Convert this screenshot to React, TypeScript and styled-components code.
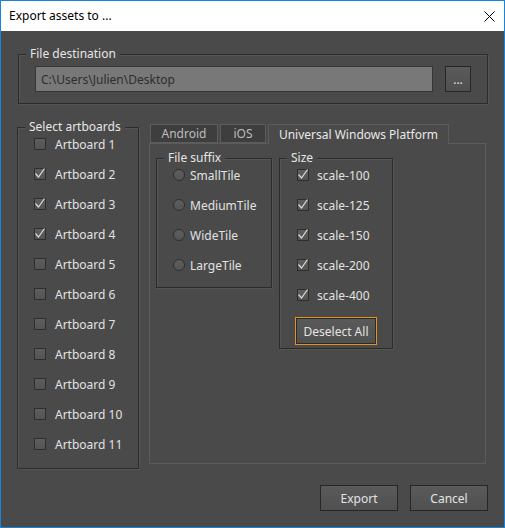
import React from 'react';
import styled, { createGlobalStyle } from 'styled-components';

const Global = createGlobalStyle`
  html, body { margin: 0; padding: 0; background: #4a4a4a; }
  body { font-family: "Noto Sans", "Segoe UI", "DejaVu Sans", sans-serif; font-size: 12px; }
  * { box-sizing: border-box; }
`;

const Window = styled.div`
  width: 505px;
  height: 528px;
  border: 1px solid #1883d7;
  background: #4a4a4a;
  display: flex;
  flex-direction: column;
  overflow: hidden;
`;

const TitleBar = styled.div`
  height: 30px;
  flex: none;
  background: #ffffff;
  display: flex;
  align-items: center;
  justify-content: space-between;
  padding: 0 9px 0 8px;
`;

const Title = styled.span`
  color: #000;
  font-size: 12px;
  line-height: 16px;
`;

const Body = styled.div`
  flex: 1;
  display: flex;
  flex-direction: column;
  padding: 23px 16px 16px 16px;
`;

const Group = styled.div<{ $w?: number; $pad: string }>`
  position: relative;
  border: 1px solid #2c2c2c;
  box-shadow: inset 1px 1px 0 #555, 1px 1px 0 #555;
  padding: ${(p) => p.$pad};
  ${(p) => (p.$w ? `width: ${p.$w}px; flex: none;` : '')}
`;

const Legend = styled.span`
  position: absolute;
  top: -9px;
  left: 7px;
  padding: 0 4px;
  line-height: 16px;
  background: #4a4a4a;
  color: #e6e6e6;
  white-space: nowrap;
`;

const DestGroup = styled(Group)`
  margin-left: 1px;
  height: 50px;
  display: flex;
  gap: 12px;
  align-items: center;
`;

const PathInput = styled.div`
  flex: 1;
  height: 26px;
  background: #787878;
  border: 1px solid #363636;
  color: #2e2e2e;
  display: flex;
  align-items: center;
  padding-left: 5px;
`;

const Button = styled.button<{ $w: number; $h?: number; $focus?: boolean }>`
  width: ${(p) => p.$w}px;
  height: ${(p) => p.$h ?? 26}px;
  flex: none;
  margin: 0;
  padding: 0;
  font: inherit;
  font-size: 12px;
  color: #e4e4e4;
  background: linear-gradient(#5a5a5a, #505050);
  border: 1px solid ${(p) => (p.$focus ? '#e8901e' : '#262626')};
  box-shadow: ${(p) => (p.$focus ? 'inset 0 0 0 1px #2a2a2a' : 'none')};
  display: flex;
  align-items: center;
  justify-content: center;
`;

const Row = styled.div`
  margin-top: 20px;
  display: flex;
  gap: 10px;
  align-items: flex-start;
`;

const ArtGroup = styled(Group)`
  margin-top: 3px;
`;

const Item = styled.div<{ $gap: number }>`
  display: flex;
  align-items: center;
  height: 30px;
  gap: ${(p) => p.$gap}px;
  color: #e2e2e2;
  white-space: nowrap;
`;

const Box = styled.span`
  width: 12px;
  height: 12px;
  flex: none;
  border: 1px solid #2e2e2e;
  background: linear-gradient(#5e5e5e, #535353);
  display: flex;
  align-items: center;
  justify-content: center;
  overflow: visible;
`;

const Radio = styled.span`
  width: 12px;
  height: 12px;
  flex: none;
  border-radius: 50%;
  border: 1px solid #2f2f2f;
  background: linear-gradient(#5e5e5e, #545454);
`;

const Tabs = styled.div`
  flex: 1;
  align-self: stretch;
  margin: 0 2px 5px 0;
  display: flex;
  flex-direction: column;
`;

const TabStrip = styled.div`
  height: 19px;
  flex: none;
  display: flex;
  align-items: flex-start;
  gap: 2px;
  padding-left: 1px;
`;

const Tab = styled.div<{ $active?: boolean; $w: number }>`
  position: relative;
  z-index: ${(p) => (p.$active ? 1 : 0)};
  width: ${(p) => p.$w}px;
  height: ${(p) => (p.$active ? 20 : 19)}px;
  border: 1px solid #5c5c5c;
  border-bottom: ${(p) => (p.$active ? 'none' : '1px solid #5c5c5c')};
  background: ${(p) => (p.$active ? '#4a4a4a' : '#3e3e3e')};
  color: ${(p) => (p.$active ? '#e8e8e8' : '#bdbdbd')};
  display: flex;
  align-items: center;
  justify-content: center;
  white-space: nowrap;
  padding-bottom: ${(p) => (p.$active ? 1 : 0)}px;
`;

const Panel = styled.div`
  flex: 1;
  border: 1px solid #5c5c5c;
  padding: 14px 0 0 6px;
  display: flex;
  gap: 7px;
  align-items: flex-start;
`;

const SizeItems = styled.div`
  padding-left: 2px;
`;

const DeselectWrap = styled.div`
  margin-top: 7px;
`;

const Footer = styled.div`
  margin-top: 16px;
  display: flex;
  justify-content: flex-end;
  gap: 12px;
`;

const Check = ({ checked }: { checked: boolean }) => (
  <Box>
    {checked && (
      <svg width="12" height="12" viewBox="0 0 12 12" style={{ overflow: 'visible' }}>
        <path d="M1.5 5.5 L4.5 9 L10.5 0.5" fill="none" stroke="#dcdcdc" strokeWidth="1.2" />
      </svg>
    )}
  </Box>
);

const artboards = [false, true, true, true, false, false, false, false, false, false, false];
const suffixes = ['SmallTile', 'MediumTile', 'WideTile', 'LargeTile'];
const scales = ['scale-100', 'scale-125', 'scale-150', 'scale-200', 'scale-400'];

export default function App() {
  return (
    <>
      <Global />
      <Window>
        <TitleBar>
          <Title>Export assets to ...</Title>
          <svg width="11" height="11" viewBox="0 0 11 11">
            <path d="M0.5 0.5 L10.5 10.5 M10.5 0.5 L0.5 10.5" stroke="#000" strokeWidth="1" />
          </svg>
        </TitleBar>
        <Body>
          <DestGroup $pad="11px 16px">
            <Legend>File destination</Legend>
            <PathInput>C:\Users\Julien\Desktop</PathInput>
            <Button $w={26}>...</Button>
          </DestGroup>
          <Row>
            <ArtGroup $w={122} $pad="1px 0 9px 16px">
              <Legend>Select artboards</Legend>
              {artboards.map((c, i) => (
                <Item key={i} $gap={9}>
                  <Check checked={c} />
                  Artboard {i + 1}
                </Item>
              ))}
            </ArtGroup>
            <Tabs>
              <TabStrip>
                <Tab $w={68}>Android</Tab>
                <Tab $w={46}>iOS</Tab>
                <Tab $w={181} $active>
                  Universal Windows Platform
                </Tab>
              </TabStrip>
              <Panel>
                <Group $w={116} $pad="1px 0 7px 16px">
                  <Legend>File suffix</Legend>
                  {suffixes.map((s) => (
                    <Item key={s} $gap={5}>
                      <Radio />
                      {s}
                    </Item>
                  ))}
                </Group>
                <Group $w={114} $pad="1px 0 3px 15px">
                  <Legend>Size</Legend>
                  <SizeItems>
                    {scales.map((s) => (
                      <Item key={s} $gap={8}>
                        <Check checked />
                        {s}
                      </Item>
                    ))}
                  </SizeItems>
                  <DeselectWrap>
                    <Button $w={82} $h={28} $focus>
                      Deselect All
                    </Button>
                  </DeselectWrap>
                </Group>
              </Panel>
            </Tabs>
          </Row>
          <Footer>
            <Button $w={78}>Export</Button>
            <Button $w={78}>Cancel</Button>
          </Footer>
        </Body>
      </Window>
    </>
  );
}
